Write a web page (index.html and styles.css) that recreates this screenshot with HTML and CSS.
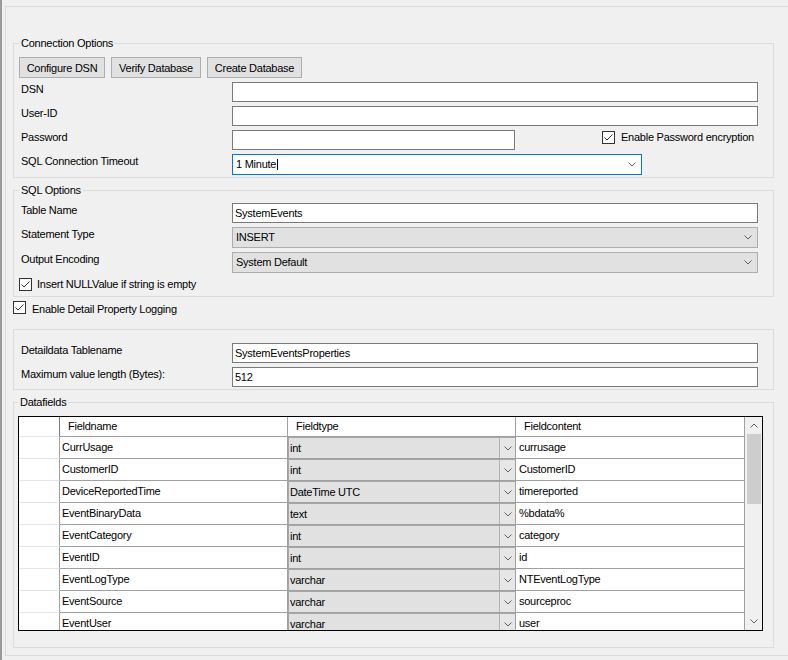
FILE: index.html
```html
<!DOCTYPE html>
<html>
<head>
<meta charset="utf-8">
<title>Database Options</title>
<link rel="stylesheet" href="styles.css">
</head>
<body>
<div class="window">
  <div class="panel">
    <fieldset class="group g-conn">
      <legend>Connection Options</legend>
      <div class="btnrow">
        <button class="btn b1">Configure DSN</button>
        <button class="btn b2">Verify Database</button>
        <button class="btn b3">Create Database</button>
      </div>
      <div class="row"><span class="lbl">DSN</span><span class="tb w-full"></span></div>
      <div class="row"><span class="lbl">User-ID</span><span class="tb w-full"></span></div>
      <div class="row">
        <span class="lbl">Password</span><span class="tb w-pass"></span>
        <span class="chk chk-enc"><svg class="box" width="13" height="13" viewBox="0 0 13 13"><rect x="0.5" y="0.5" width="12" height="12" fill="#fff" stroke="#333"/><polyline points="2.5,6.5 5,9 10.5,3.5" fill="none" stroke="#333"/></svg><span class="t">Enable Password encryption</span></span>
      </div>
      <div class="row">
        <span class="lbl">SQL Connection Timeout</span>
        <span class="cb focus w-timeout"><span class="val">1 Minute<i class="caret"></i></span><svg class="chev" width="8" height="5" viewBox="0 0 8 5"><polyline points="0.5,0.5 4,4 7.5,0.5" fill="none" stroke="#606060"/></svg></span>
      </div>
    </fieldset>

    <fieldset class="group g-sql">
      <legend>SQL Options</legend>
      <div class="row first"><span class="lbl">Table Name</span><span class="tb w-full">SystemEvents</span></div>
      <div class="row">
        <span class="lbl">Statement Type</span>
        <span class="cb w-full"><span class="val">INSERT</span><svg class="chev" width="8" height="5" viewBox="0 0 8 5"><polyline points="0.5,0.5 4,4 7.5,0.5" fill="none" stroke="#606060"/></svg></span>
      </div>
      <div class="row">
        <span class="lbl">Output Encoding</span>
        <span class="cb w-full"><span class="val">System Default</span><svg class="chev" width="8" height="5" viewBox="0 0 8 5"><polyline points="0.5,0.5 4,4 7.5,0.5" fill="none" stroke="#606060"/></svg></span>
      </div>
      <div class="chk chk-null"><svg class="box" width="13" height="13" viewBox="0 0 13 13"><rect x="0.5" y="0.5" width="12" height="12" fill="#fff" stroke="#333"/><polyline points="2.5,6.5 5,9 10.5,3.5" fill="none" stroke="#333"/></svg><span class="t">Insert NULLValue if string is empty</span></div>
    </fieldset>

    <div class="chk chk-detail"><svg class="box" width="13" height="13" viewBox="0 0 13 13"><rect x="0.5" y="0.5" width="12" height="12" fill="#fff" stroke="#333"/><polyline points="2.5,6.5 5,9 10.5,3.5" fill="none" stroke="#333"/></svg><span class="t">Enable Detail Property Logging</span></div>

    <div class="group g-detail">
      <div class="row first"><span class="lbl">Detaildata Tablename</span><span class="tb w-full">SystemEventsProperties</span></div>
      <div class="row"><span class="lbl">Maximum value length (Bytes):</span><span class="tb w-full">512</span></div>
    </div>

    <fieldset class="group g-fields">
      <legend>Datafields</legend>
      <div class="grid">
        <div class="gtable">
          <div class="ghead">
            <div class="hc hc-rh"></div>
            <div class="hc">Fieldname</div>
            <div class="hc">Fieldtype</div>
            <div class="hc hc-last">Fieldcontent</div>
          </div>
          <div class="grow"><div class="rh"></div><div class="c">CurrUsage</div><div class="ft"><div class="ftin"><span class="ftv">int</span><span class="dd"><svg width="8" height="5" viewBox="0 0 8 5"><polyline points="0.5,0.5 4,4 7.5,0.5" fill="none" stroke="#606060"/></svg></span></div></div><div class="c cc">currusage</div></div>
          <div class="grow"><div class="rh"></div><div class="c">CustomerID</div><div class="ft"><div class="ftin"><span class="ftv">int</span><span class="dd"><svg width="8" height="5" viewBox="0 0 8 5"><polyline points="0.5,0.5 4,4 7.5,0.5" fill="none" stroke="#606060"/></svg></span></div></div><div class="c cc">CustomerID</div></div>
          <div class="grow"><div class="rh"></div><div class="c">DeviceReportedTime</div><div class="ft"><div class="ftin"><span class="ftv">DateTime UTC</span><span class="dd"><svg width="8" height="5" viewBox="0 0 8 5"><polyline points="0.5,0.5 4,4 7.5,0.5" fill="none" stroke="#606060"/></svg></span></div></div><div class="c cc">timereported</div></div>
          <div class="grow"><div class="rh"></div><div class="c">EventBinaryData</div><div class="ft"><div class="ftin"><span class="ftv">text</span><span class="dd"><svg width="8" height="5" viewBox="0 0 8 5"><polyline points="0.5,0.5 4,4 7.5,0.5" fill="none" stroke="#606060"/></svg></span></div></div><div class="c cc">%bdata%</div></div>
          <div class="grow"><div class="rh"></div><div class="c">EventCategory</div><div class="ft"><div class="ftin"><span class="ftv">int</span><span class="dd"><svg width="8" height="5" viewBox="0 0 8 5"><polyline points="0.5,0.5 4,4 7.5,0.5" fill="none" stroke="#606060"/></svg></span></div></div><div class="c cc">category</div></div>
          <div class="grow"><div class="rh"></div><div class="c">EventID</div><div class="ft"><div class="ftin"><span class="ftv">int</span><span class="dd"><svg width="8" height="5" viewBox="0 0 8 5"><polyline points="0.5,0.5 4,4 7.5,0.5" fill="none" stroke="#606060"/></svg></span></div></div><div class="c cc">id</div></div>
          <div class="grow"><div class="rh"></div><div class="c">EventLogType</div><div class="ft"><div class="ftin"><span class="ftv">varchar</span><span class="dd"><svg width="8" height="5" viewBox="0 0 8 5"><polyline points="0.5,0.5 4,4 7.5,0.5" fill="none" stroke="#606060"/></svg></span></div></div><div class="c cc">NTEventLogType</div></div>
          <div class="grow"><div class="rh"></div><div class="c">EventSource</div><div class="ft"><div class="ftin"><span class="ftv">varchar</span><span class="dd"><svg width="8" height="5" viewBox="0 0 8 5"><polyline points="0.5,0.5 4,4 7.5,0.5" fill="none" stroke="#606060"/></svg></span></div></div><div class="c cc">sourceproc</div></div>
          <div class="grow"><div class="rh"></div><div class="c">EventUser</div><div class="ft"><div class="ftin"><span class="ftv">varchar</span><span class="dd"><svg width="8" height="5" viewBox="0 0 8 5"><polyline points="0.5,0.5 4,4 7.5,0.5" fill="none" stroke="#606060"/></svg></span></div></div><div class="c cc">user</div></div>
        </div>
        <div class="vscroll">
          <div class="sbtn"><svg width="8" height="5" viewBox="0 0 8 5"><polyline points="0.5,4.5 4,1 7.5,4.5" fill="none" stroke="#606060"/></svg></div>
          <div class="thumb"></div>
          <div class="sspace"></div>
          <div class="sbtn"><svg width="8" height="5" viewBox="0 0 8 5"><polyline points="0.5,0.5 4,4 7.5,0.5" fill="none" stroke="#606060"/></svg></div>
        </div>
      </div>
    </fieldset>
  </div>
</div>
</body>
</html>
```
FILE: styles.css
```css
* { box-sizing: border-box; }
html, body { margin: 0; padding: 0; }
body {
  width: 788px;
  height: 660px;
  overflow: hidden;
  background: #f0f0f0;
  font-family: "Liberation Sans", Arial, sans-serif;
  font-size: 11px;
  letter-spacing: -0.25px;
  color: #000;
}

.window {
  height: 660px;
  border-left: 2px solid #9a9a9a;
  padding: 6px 0 0 3px;
}
.panel {
  height: 650px;
  border: 1px solid #dadada;
  border-right: 0;
  padding: 29px 14px 0 7px;
}

.group {
  margin: 0;
  min-width: 0;
  border: 1px solid #dcdcdc;
}
fieldset.group legend {
  padding: 0 2px;
  margin: 0;
  line-height: 14px;
  height: 14px;
}

.g-conn { padding: 7px 15px 2px 5px; }
.g-sql { margin-top: 5px; padding: 6px 15px 5px 5px; }
.g-detail { margin-top: 15px; padding: 13px 15px 2px 5px; }
.g-fields { margin-top: 5px; padding: 7px 10px 16px 4px; }
.g-fields legend { margin-left: 1px; }

.btnrow { display: flex; gap: 6px; height: 21px; }
.btn {
  font: inherit;
  letter-spacing: inherit;
  color: #000;
  height: 21px;
  margin: 0;
  padding: 0;
  background: #e1e1e1;
  border: 1px solid #adadad;
  border-radius: 0;
  text-align: center;
}
.b1 { width: 86px; }
.b2 { width: 90px; }
.b3 { width: 95px; }

.row { display: flex; align-items: flex-start; margin-top: 4px; }
.row.first { margin-top: 0; }
.lbl { width: 213px; flex: none; padding-left: 2px; line-height: 15px; white-space: nowrap; }

.tb {
  display: block;
  height: 20px;
  border: 1px solid #7a7a7a;
  background: #fff;
  padding: 0 2px;
  line-height: 18px;
  white-space: nowrap;
}
.w-full { width: 526px; }
.w-pass { width: 283px; }
.w-timeout { width: 410px; }

.cb {
  display: flex;
  align-items: center;
  justify-content: space-between;
  height: 21px;
  border: 1px solid #adadad;
  background: #e1e1e1;
  padding: 0 5px 0 3px;
  line-height: 19px;
}
.cb.focus { border-color: #0078d7; background: #fff; }
.chev { display: block; flex: none; }
.caret {
  display: inline-block;
  width: 1px;
  height: 11px;
  background: #000;
  vertical-align: -2px;
  margin-left: 1px;
}

.chk { display: flex; align-items: flex-start; gap: 6px; height: 13px; line-height: 13px; white-space: nowrap; }
.chk .box { display: block; flex: none; }
.chk .t { display: block; }
.chk-enc { margin: 1px 0 0 87px; }
.chk-null { margin-top: 5px; }
.chk-null .t { margin-left: -1px; }
.chk-detail { margin-top: 4px; }
.chk-detail .t { padding-top: 2px; }

/* Data grid */
.grid {
  display: flex;
  width: 745px;
  height: 215px;
  border: 1px solid #000;
  background: #fff;
}
.gtable { width: 726px; overflow: hidden; }
.ghead, .grow {
  display: grid;
  grid-template-columns: 41px 228px 228px 229px;
}
.ghead { height: 20px; }
.hc {
  border-right: 1px solid #a0a0a0;
  border-bottom: 1px solid #a0a0a0;
  padding-left: 8px;
  line-height: 19px;
  white-space: nowrap;
}
.hc-rh { border-right-color: #7a7a7a; border-bottom-color: #e3e3e3; }
.grow { height: 22px; }
.rh { border-right: 1px solid #a0a0a0; border-bottom: 1px solid #e3e3e3; }
.c {
  border-right: 1px solid #a0a0a0;
  border-bottom: 1px solid #a0a0a0;
  padding-left: 2px;
  line-height: 21px;
  white-space: nowrap;
  overflow: hidden;
}
.cc { padding-left: 3px; }
.ft { border-right: 1px solid #a0a0a0; border-bottom: 1px solid #a0a0a0; }
.ftin {
  display: flex;
  height: 21px;
  background: #e1e1e1;
  border-left: 1px solid #a6a6a6;
  border-top: 1px solid #a6a6a6;
}
.ftv { flex: 1; padding-left: 1px; line-height: 20px; white-space: nowrap; }
.dd {
  width: 16px;
  flex: none;
  display: flex;
  align-items: center;
  justify-content: center;
  border-left: 1px solid #b4b4b4;
  background: #e6e6e6;
}
.dd svg { display: block; }

.vscroll {
  width: 17px;
  display: flex;
  flex-direction: column;
  background: #f0f0f0;
}
.sbtn { height: 17px; flex: none; display: flex; align-items: center; justify-content: center; }
.sbtn svg { display: block; }
.thumb { height: 70px; flex: none; margin: 0 1px 0 2px; background: #cdcdcd; }
.sspace { flex: 1; }
```
